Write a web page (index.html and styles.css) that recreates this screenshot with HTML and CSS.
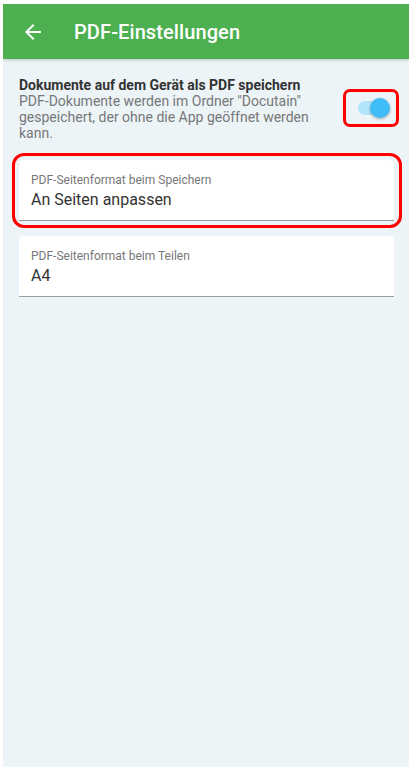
FILE: index.html
```html
<!DOCTYPE html>
<html>
<head>
<title>PDF-Einstellungen</title>
<meta name="viewport" content="width=device-width, initial-scale=1">
<link rel="stylesheet" href="styles.css">
</head>
<body>
    <div class="screen">
        <header class="toolbar">
            <svg class="back" width="24" height="24" viewBox="0 0 24 24">
                <path d="M20 11H7.83l5.59-5.59L12 4l-8 8 8 8 1.41-1.41L7.83 13H20v-2z" fill="#fff"/>
            </svg>
            <h1>PDF-Einstellungen</h1>
        </header>

        <main class="content">
            <div class="setting">
                <div class="setting-text">
                    <div class="setting-title">Dokumente auf dem Gerät als PDF speichern</div>
                    <div class="setting-desc">PDF-Dokumente werden im Ordner "Docutain" gespeichert, der ohne die App geöffnet werden kann.</div>
                </div>
                <div class="switch-wrap marked">
                    <div class="switch">
                        <span class="track"></span>
                        <span class="thumb"></span>
                    </div>
                </div>
            </div>

            <div class="field marked-card">
                <label>PDF-Seitenformat beim Speichern</label>
                <div class="value">An Seiten anpassen</div>
            </div>

            <div class="field">
                <label>PDF-Seitenformat beim Teilen</label>
                <div class="value">A4</div>
            </div>
        </main>
    </div>
</body>
</html>
```

FILE: styles.css
```css
html, body{
    margin: 0;
    background-color: #fff;
}

.screen{
    width: 406px;
    height: 763px;
    margin: 4px 0 0 3px;
    background-color: #ecf4f8;
    font-family: Roboto, "Noto Sans", sans-serif;
    overflow: hidden;
}

.toolbar{
    display: flex;
    align-items: center;
    height: 55px;
    background-color: #4caf50;
    box-shadow: 0 1px 3px rgba(0, 0, 0, 0.2);
}

.back{
    margin-left: 18px;
}

.toolbar h1{
    margin: 0 0 0 29px;
    color: #fff;
    font-size: 20px;
    font-weight: 500;
    letter-spacing: 0.1px;
}

.content{
    padding: 18px 15px 0 16px;
}

.setting{
    display: flex;
    align-items: center;
}

.setting-text{
    flex: 1;
    padding-right: 30px;
}

.setting-title{
    font-size: 14px;
    line-height: 16px;
    font-weight: bold;
    color: #333;
}

.setting-desc{
    font-size: 14px;
    line-height: 16px;
    color: #777;
}

.switch-wrap{
    position: relative;
    display: flex;
    align-items: center;
    justify-content: flex-end;
    box-sizing: border-box;
    width: 56px;
    height: 38px;
    padding-right: 9px;
    margin-right: -5px;
    margin-top: -2px;
}

.switch{
    position: relative;
    width: 32px;
    height: 21px;
}

.track{
    position: absolute;
    left: 0;
    top: 3px;
    width: 30px;
    height: 14px;
    border-radius: 7px;
    background-color: #b3e5fc;
}

.thumb{
    position: absolute;
    right: 0;
    top: 0;
    width: 20px;
    height: 20px;
    border-radius: 50%;
    background-color: #40bdf8;
    box-shadow: 0 1px 3px rgba(0, 0, 0, 0.3);
}

.marked::after{
    content: "";
    position: absolute;
    left: 0;
    right: 0;
    top: 0;
    bottom: 0;
    border: 3px solid #f00;
    border-radius: 7px;
}

.field{
    position: relative;
    background-color: #fff;
    border-radius: 4px 4px 0 0;
    border-bottom: 1px solid #9e9e9e;
    padding: 12px 12px 0 12px;
    height: 48px;
}

.marked-card{
    margin-top: 19px;
    margin-bottom: 15px;
}

.marked-card::after{
    content: "";
    position: absolute;
    left: -7px;
    right: -8px;
    top: -7px;
    bottom: -8px;
    border: 3px solid #f00;
    border-radius: 12px;
}

.field label{
    display: block;
    font-size: 12px;
    line-height: 16px;
    color: #777;
}

.value{
    font-size: 16px;
    line-height: 22px;
    color: #333;
    margin-top: 1px;
}
```
